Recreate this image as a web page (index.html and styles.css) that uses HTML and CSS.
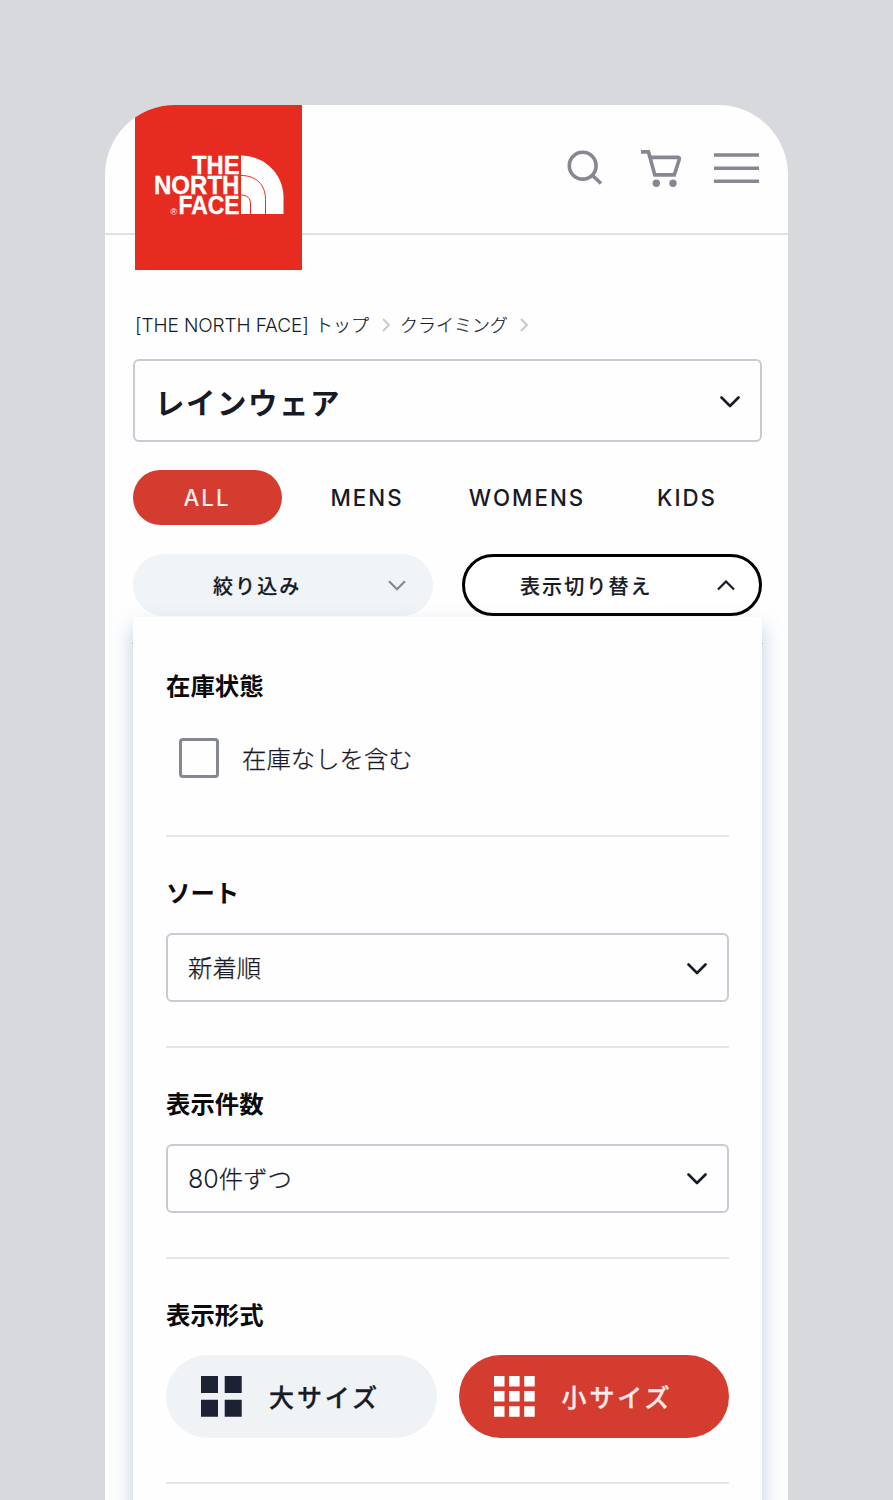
FILE: index.html
```html
<!DOCTYPE html>
<html lang="ja">
<head>
<meta charset="utf-8">
<title>THE NORTH FACE レインウェア</title>
<link rel="stylesheet" href="styles.css">
</head>
<body>
<div class="phone">
  <header class="header">
    <svg class="logo" viewBox="0 0 167 165" role="img" aria-label="THE NORTH FACE">
      <rect width="167" height="165" fill="#e62c20"/>
      <g class="logo-text">
        <text x="57" y="69" textLength="47.5" lengthAdjust="spacingAndGlyphs">THE</text>
        <text x="19" y="89" textLength="85.5" lengthAdjust="spacingAndGlyphs">NORTH</text>
        <text x="43.5" y="109" textLength="61" lengthAdjust="spacingAndGlyphs">FACE</text>
      </g>
      <text class="logo-mark" x="35.500" y="109.500">®</text>
      <path fill="#fff" d="M106 50.500c24 0 42.500 19 42.500 42v16.500H106z"/>
      <path fill="none" stroke="#e62c20" d="M106 70.500c15 0 24.500 9 24.500 24V109M106 90c6 0 9.500 3 9.500 9v10"/>
    </svg>
    <nav class="actions">
      <svg class="icon-search" width="36" height="36" viewBox="0 0 36 36"><circle cx="15.700" cy="15.700" r="13.400"/><path d="M25 25l9 8.500"/></svg>
      <svg class="icon-cart" width="42" height="38" viewBox="0 0 42 38"><path d="M0 1.900h7.500l6.300 23h19.500l5-15.600q.400-1.900-1.500-1.900H9.500"/><circle class="wheel" cx="15.300" cy="33.300" r="3.700"/><circle class="wheel" cx="32" cy="33.300" r="3.700"/></svg>
      <svg class="icon-menu" width="45" height="31" viewBox="0 0 45 31"><path d="M0 2h45M0 15.200h45M0 28.300h45"/></svg>
    </nav>
  </header>

  <main class="content">
    <nav class="breadcrumb">
      <span class="crumb-brand">[THE NORTH FACE]</span><span class="crumb-top">トップ</span>
      <svg width="8" height="14" viewBox="0 0 8 14"><path d="M1 1l6 6-6 6"/></svg>
      <span class="crumb-item">クライミング</span>
      <svg width="8" height="14" viewBox="0 0 8 14"><path d="M1 1l6 6-6 6"/></svg>
    </nav>

    <div class="select select-title">
      <span>レインウェア</span>
      <svg class="chevron" width="20" height="12" viewBox="0 0 20 12"><path d="M1.500 1.500L10 10l8.500-8.500"/></svg>
    </div>

    <div class="tabs">
      <span class="tab tab-active">ALL</span>
      <span class="tab">MENS</span>
      <span class="tab">WOMENS</span>
      <span class="tab">KIDS</span>
    </div>

    <div class="toggles">
      <div class="toggle">
        <span>絞り込み</span>
        <svg class="chevron chevron-muted" width="18" height="11" viewBox="0 0 18 11"><path d="M1 1.200l8 8 8-8"/></svg>
      </div>
      <div class="toggle toggle-open">
        <span>表示切り替え</span>
        <svg class="chevron chevron-up" width="18" height="11" viewBox="0 0 18 11"><path d="M1 9.500l8-8 8 8"/></svg>
      </div>
    </div>

    <div class="panel">
      <section class="section section-stock">
        <h2>在庫状態</h2>
        <label class="check"><span class="box"></span><span>在庫なしを含む</span></label>
      </section>
      <section class="section">
        <h2>ソート</h2>
        <div class="select">
          <span>新着順</span>
          <svg class="chevron" width="20" height="12" viewBox="0 0 20 12"><path d="M1.500 1.500L10 10l8.500-8.500"/></svg>
        </div>
      </section>
      <section class="section">
        <h2>表示件数</h2>
        <div class="select">
          <span><span class="num">80</span>件ずつ</span>
          <svg class="chevron" width="20" height="12" viewBox="0 0 20 12"><path d="M1.500 1.500L10 10l8.500-8.500"/></svg>
        </div>
      </section>
      <section class="section section-format">
        <h2>表示形式</h2>
        <div class="sizes">
          <div class="size">
            <svg width="41" height="41" viewBox="0 0 41 41"><path d="M0 0h17v17H0zM23.700 0h17v17h-17zM0 23.700h17v17H0zM23.700 23.700h17v17h-17z"/></svg>
            <span>大サイズ</span>
          </div>
          <div class="size size-active">
            <svg width="41" height="41" viewBox="0 0 41 41"><path d="M0 0h10.500v10.500H0zM15.100 0h10.500v10.500H15.100zM30.200 0h10.500v10.500H30.200zM0 15.100h10.500v10.500H0zM15.100 15.100h10.500v10.500H15.100zM30.200 15.100h10.500v10.500H30.200zM0 30.200h10.500v10.500H0zM15.100 30.200h10.500v10.500H15.100zM30.200 30.200h10.500v10.500H30.200z"/></svg>
            <span>小サイズ</span>
          </div>
        </div>
      </section>
      <section class="section"></section>
    </div>
  </main>
</div>
</body>
</html>
```
FILE: styles.css
```css
* { box-sizing: border-box; }

body {
  margin: 0;
  height: 1500px;
  padding: 105px 105px 0;
  overflow: hidden;
  background: #d7d9dd;
  color: #171a27;
  font-family: "Noto Sans CJK JP", sans-serif;
}

svg { display: block; flex: none; }

.phone {
  isolation: isolate;
  width: 683px;
  height: 1395px;
  overflow: hidden;
  border-radius: 70px 70px 0 0;
  background: #fefefe;
}

.header {
  display: flex;
  justify-content: space-between;
  align-items: flex-start;
  height: 130px;
  padding: 0 30px;
  border-bottom: 2px solid #dfe0e1;
}

.logo { width: 167px; height: 165px; }
.logo-text {
  fill: #fff;
  stroke: #fff;
  stroke-width: .3;
  font: bold 25px "Liberation Sans", Arial, sans-serif;
}
.logo-mark { fill: #fff; font: 9px "Liberation Sans", Arial, sans-serif; }

.actions {
  display: flex;
  align-items: flex-start;
  padding-top: 45px;
  fill: none;
  stroke: #858892;
}
.icon-search { stroke-width: 3.6; margin-right: 38px; }
.icon-cart { stroke-width: 3.6; margin-right: 31px; }
.icon-menu { stroke-width: 3.4; margin: 3px -1px 0 0; }
.wheel { fill: #858892; stroke: none; }

.content { padding: 0 26px 0 28px; }

.breadcrumb {
  display: flex;
  align-items: center;
  height: 30px;
  margin-top: 75px;
  padding-left: 2px;
  font-size: 18px;
  font-weight: 300;
  line-height: 29px;
  fill: none;
  stroke: #c5c7cb;
  stroke-width: 1.8;
}
.breadcrumb span { padding-bottom: 1px; -webkit-text-stroke: .2px currentColor; }
.breadcrumb .crumb-brand {
  width: 180px;
  padding-bottom: 0;
  font-family: Inter, "Liberation Sans", sans-serif;
  font-size: 19px;
  letter-spacing: -.1px;
  white-space: nowrap;
  -webkit-text-stroke: 0;
}
.crumb-top { margin-right: 13px; }
.crumb-item { margin: 0 12px 0 10px; }

.select {
  display: flex;
  align-items: center;
  justify-content: space-between;
  height: 69px;
  padding: 0 20px;
  border: 2px solid #c9cad4;
  border-radius: 6px;
  font-size: 24.400px;
  font-weight: 300;
}
.select > span { padding-bottom: 2px; -webkit-text-stroke: .25px currentColor; }
.select > .chevron { margin-top: 2px; }
.select-title {
  height: 83px;
  margin-top: 19px;
  font-size: 29.500px;
  font-weight: 700;
  letter-spacing: 1.500px;
}
.select-title > span { padding-bottom: 0; -webkit-text-stroke: 0; }
.num { font-family: Inter, "Liberation Sans", sans-serif; font-size: 25px; -webkit-text-stroke: 0; }

.chevron {
  fill: none;
  stroke: #171a27;
  stroke-width: 2.6;
  stroke-linecap: round;
  stroke-linejoin: round;
}

.tabs {
  display: grid;
  grid-template-columns: repeat(4, 1fr);
  gap: 11px;
  margin-top: 28px;
}
.tab {
  height: 55px;
  padding-right: 1px;
  border-radius: 28px;
  font: 500 22.300px/55px Inter, "Liberation Sans", sans-serif;
  letter-spacing: 2px;
  text-align: center;
}
.tab-active { background: #d53c30; color: #ffeceb; }

.toggles {
  display: grid;
  grid-template-columns: 1fr 1fr;
  gap: 29px;
  margin-top: 29px;
}
.toggle {
  display: flex;
  align-items: center;
  justify-content: space-between;
  height: 62px;
  padding: 0 27px 0 80px;
  border-radius: 31px;
  background: #f0f4f7;
  font-size: 20px;
  font-weight: 500;
  letter-spacing: 2.100px;
}
.toggle > span { -webkit-text-stroke: .2px currentColor; }
.toggle-open {
  padding: 0 24px 0 55px;
  border: 3px solid #000;
  background: #fff;
}
.chevron-muted { stroke: #858892; stroke-width: 2.2; stroke-linecap: butt; stroke-linejoin: miter; }
.chevron-up { stroke-width: 2.2; stroke-linecap: butt; stroke-linejoin: miter; }

.panel {
  position: relative;
  height: 920px;
  margin-top: 1px;
  padding: 0 33px;
  background: #fefefe;
  box-shadow: 0 10px 19px rgba(110, 143, 185, .44);
}
.panel::before {
  content: "";
  position: absolute;
  z-index: -1;
  top: 26px;
  left: -1px;
  right: -1px;
  height: 1px;
  background: #b9bfca;
}

.section {
  height: 210.600px;
  padding-top: 38px;
  border-top: 2px solid #e5e6e8;
}
.section-stock { height: 218.400px; padding-top: 51px; border-top: 0; }
.section-format { height: 225px; }

h2 {
  margin: 0;
  color: #0b0b0d;
  font-size: 24.400px;
  font-weight: 700;
  line-height: 34px;
}
.section .select { margin-top: 24px; }

.check {
  display: flex;
  align-items: center;
  gap: 23px;
  margin: 36px 0 0 13px;
  font-size: 24.400px;
  font-weight: 300;
  line-height: 40px;
  -webkit-text-stroke: .25px currentColor;
}
.box {
  width: 40px;
  height: 40px;
  border: 3px solid #858892;
  border-radius: 4px;
}

.sizes {
  display: grid;
  grid-template-columns: 1fr 1fr;
  gap: 22px;
  margin-top: 24px;
}
.size {
  display: flex;
  align-items: center;
  gap: 27px;
  height: 83px;
  padding-left: 35px;
  border-radius: 42px;
  background: #f0f3f6;
  fill: #1c2233;
  font-size: 25px;
  font-weight: 500;
  letter-spacing: 2.900px;
  -webkit-text-stroke: .3px currentColor;
}
.size > span { padding-bottom: 1px; }
.size-active { background: #d53c30; color: #ffeceb; fill: #fff; }
```
